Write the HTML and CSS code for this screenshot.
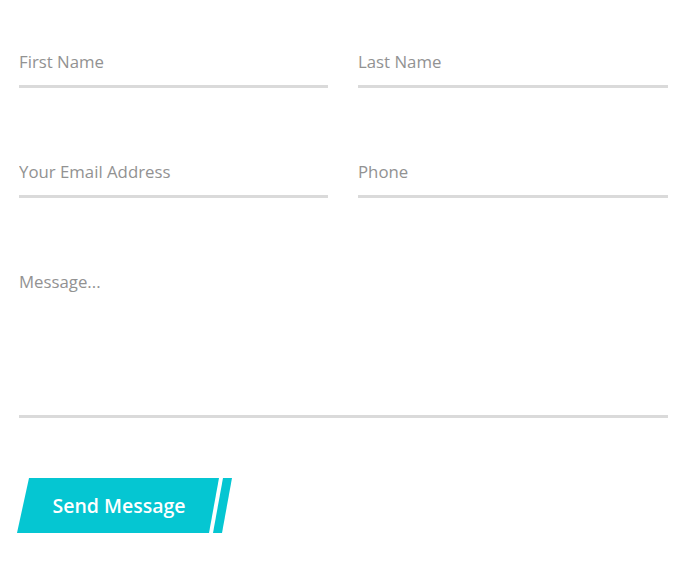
FILE: index.html
```html
<!DOCTYPE html>
<html>
<head>
<meta charset="utf-8">
<link rel="stylesheet" href="styles.css">
</head>
<body>
<form class="form">
  <div class="row">
    <input class="field" type="text" placeholder="First Name">
    <input class="field" type="text" placeholder="Last Name">
  </div>
  <div class="row">
    <input class="field" type="email" placeholder="Your Email Address">
    <input class="field" type="tel" placeholder="Phone">
  </div>
  <textarea class="field message" placeholder="Message..."></textarea>
  <button class="send" type="button"><span class="label">Send Message</span></button>
</form>
</body>
</html>
```
FILE: styles.css
```css
html, body {
  margin: 0;
  padding: 0;
  background: #ffffff;
}
.form {
  display: flex;
  flex-direction: column;
  padding: 36px 19px 0 19px;
  width: 649px;
  font-family: "Open Sans", "Liberation Sans", sans-serif;
}
.row {
  display: grid;
  grid-template-columns: 309px 310px;
  column-gap: 30px;
  margin-bottom: 58px;
}
.field {
  box-sizing: border-box;
  height: 52px;
  border: none;
  border-bottom: 3px solid #dadada;
  padding: 2px 0 0 0;
  margin: 0;
  font-family: inherit;
  font-size: 16.8px;
  color: #555;
  background: transparent;
  outline: none;
}
.field::placeholder {
  color: #929292;
  opacity: 1;
}
.message {
  width: 649px;
  height: 162px;
  padding-top: 14px;
  line-height: 24px;
  resize: none;
}
.send {
  position: relative;
  margin-top: 60px;
  width: 216px;
  height: 55px;
  margin-left: -2px;
  border: none;
  padding: 0;
  background: transparent;
  cursor: pointer;
  font-family: inherit;
  text-align: left;
}
.send::before,
.send::after {
  content: "";
  position: absolute;
  inset: 0;
  background: #05c6d2;
}
.send::before {
  clip-path: polygon(12px 0, 202px 0, 192px 55px, 0 55px);
}
.send::after {
  clip-path: polygon(206px 0, 215px 0, 205px 55px, 196px 55px);
}
.label {
  position: relative;
  z-index: 1;
  display: block;
  width: 204px;
  text-align: center;
  color: #ffffff;
  font-size: 19.5px;
  font-weight: 600;
}
```
